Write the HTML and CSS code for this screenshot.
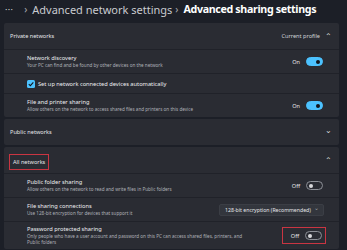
FILE: index.html
```html
<!DOCTYPE html>
<html lang="en">
<head>
  <meta charset="UTF-8" />
  <title>Advanced sharing settings</title>
  <link rel="stylesheet" href="styles.css">
</head>
<body>
  <div class="crumbs">
    <span class="dots">&middot;&middot;&middot;</span>
    <span class="sep">&rsaquo;</span>
    <span class="crumb">Advanced network settings</span>
    <span class="sep">&rsaquo;</span>
    <span class="crumb current">Advanced sharing settings</span>
  </div>

  <!-- Private networks -->
  <div class="card">
    <div class="card-head">
      <span class="head-title">Private networks</span>
      <span class="head-right">Current profile <span class="chev">&#8963;</span></span>
    </div>
    <div class="row">
      <div class="row-text">
        <div class="row-title">Network discovery</div>
        <div class="row-sub">Your PC can find and be found by other devices on the network</div>
      </div>
      <div class="ctrl"><span class="state">On</span><span class="toggle on"></span></div>
    </div>
    <div class="row check-row">
      <span class="checkbox">
        <svg viewBox="0 0 10 10" width="8" height="8"><path d="M2.2 5.2 L4.2 7.1 L7.9 3" fill="none" stroke="#10141c" stroke-width="1.3"/></svg>
      </span>
      <span class="check-label">Set up network connected devices automatically</span>
    </div>
    <div class="row">
      <div class="row-text">
        <div class="row-title">File and printer sharing</div>
        <div class="row-sub">Allow others on the network to access shared files and printers on this device</div>
      </div>
      <div class="ctrl"><span class="state">On</span><span class="toggle on"></span></div>
    </div>
  </div>

  <!-- Public networks -->
  <div class="card">
    <div class="card-head">
      <span class="head-title">Public networks</span>
      <span class="head-right"><span class="chev down">&#8964;</span></span>
    </div>
  </div>

  <!-- All networks -->
  <div class="card">
    <div class="card-head">
      <span class="head-title marked">All networks</span>
      <span class="head-right"><span class="chev">&#8963;</span></span>
    </div>
    <div class="row">
      <div class="row-text">
        <div class="row-title">Public folder sharing</div>
        <div class="row-sub">Allow others on the network to read and write files in Public folders</div>
      </div>
      <div class="ctrl"><span class="state">Off</span><span class="toggle"></span></div>
    </div>
    <div class="row">
      <div class="row-text">
        <div class="row-title">File sharing connections</div>
        <div class="row-sub">Use 128-bit encryption for devices that support it</div>
      </div>
      <div class="dropdown">128-bit encryption (Recommended) <span class="chev down small">&#8964;</span></div>
    </div>
    <div class="row tall">
      <div class="row-text">
        <div class="row-title">Password protected sharing</div>
        <div class="row-sub narrow">Only people who have a user account and password on this PC can access shared files, printers, and Public folders</div>
      </div>
      <div class="ctrl marked-box"><span class="state">Off</span><span class="toggle"></span></div>
    </div>
  </div>
</body>
</html>
```

FILE: styles.css
```css
body {
  margin: 0;
  width: 347px;
  height: 250px;
  overflow: hidden;
  background: #1c1f27;
  font-family: 'Noto Sans', 'Open Sans', sans-serif;
  color: #e6e7ea;
  padding: 0 8px 0 4px;
  box-sizing: border-box;
}

.crumbs {
  height: 23px;
  display: flex;
  align-items: center;
  font-size: 11px;
  color: #c9cbd0;
  padding-left: 1px;
  padding-bottom: 5px;
  box-sizing: border-box;
  white-space: nowrap;
}

.dots {
  font-size: 9px;
  letter-spacing: 0.3px;
  margin-right: 8px;
}

.sep {
  font-size: 10px;
  margin: 0 5px 0 3px;
  color: #a9acb2;
}

.crumb.current {
  font-weight: bold;
  font-size: 10.7px;
  letter-spacing: -0.35px;
  color: #ffffff;
}

.card {
  background: #2a2c33;
  margin-bottom: 2px;
  border-radius: 2px;
}

.card-head {
  height: 26px;
  display: flex;
  align-items: center;
  justify-content: space-between;
  padding: 0 7px 0 6px;
  font-size: 5.6px;
}

.head-right {
  display: flex;
  align-items: center;
  gap: 5px;
  color: #d0d2d6;
}

.chev {
  font-size: 8px;
  line-height: 1;
  color: #d6d8dc;
}

.chev.down {
  margin-top: -4px;
}

.row {
  border-top: 1px solid #202229;
  height: 23px;
  display: flex;
  align-items: center;
  justify-content: space-between;
  padding: 0 16px 0 23px;
}

.row.tall {
  height: 27px;
}

.row-title {
  font-size: 5.7px;
  color: #eceef1;
  line-height: 7px;
}

.row-sub {
  font-size: 4.6px;
  color: #aeb1b7;
  line-height: 6px;
}

.row-sub.narrow {
  width: 218px;
}

.ctrl {
  display: flex;
  align-items: center;
  gap: 6px;
  font-size: 5.6px;
}

.state {
  color: #e2e3e6;
}

.toggle {
  display: block;
  width: 15px;
  height: 7px;
  border: 1px solid #8d9097;
  border-radius: 5px;
  position: relative;
  box-sizing: content-box;
}

.toggle::after {
  content: '';
  position: absolute;
  top: 1.5px;
  left: 2px;
  width: 4px;
  height: 4px;
  border-radius: 50%;
  background: #d8d9dc;
}

.toggle.on {
  background: #4cc2ff;
  border-color: #4cc2ff;
}

.toggle.on::after {
  left: auto;
  right: 2px;
  background: #12161d;
}

.check-row {
  justify-content: flex-start;
  gap: 3px;
  height: 19px;
}

.checkbox {
  width: 8px;
  height: 8px;
  background: #4cc2ff;
  border-radius: 1.5px;
  display: flex;
  align-items: center;
  justify-content: center;
}

.check-label {
  font-size: 5.7px;
  color: #eceef1;
}

.marked {
  border: 1px solid #c93542;
  padding: 3px 3px;
  margin-left: -1px;
  margin-top: 3px;
}

.dropdown {
  background: #33363d;
  border: 1px solid #3b3e45;
  border-radius: 2px;
  height: 12px;
  width: 105px;
  box-sizing: border-box;
  display: flex;
  align-items: center;
  justify-content: space-between;
  padding: 0 4px 0 5px;
  font-size: 5.2px;
  white-space: nowrap;
  color: #e6e7ea;
  margin-right: -1px;
}

.chev.small {
  font-size: 6px;
  color: #9ea1a7;
}

.marked-box {
  border: 1px solid #c93542;
  padding: 3px 3px 3px 8px;
  margin-right: -3px;
}
```
